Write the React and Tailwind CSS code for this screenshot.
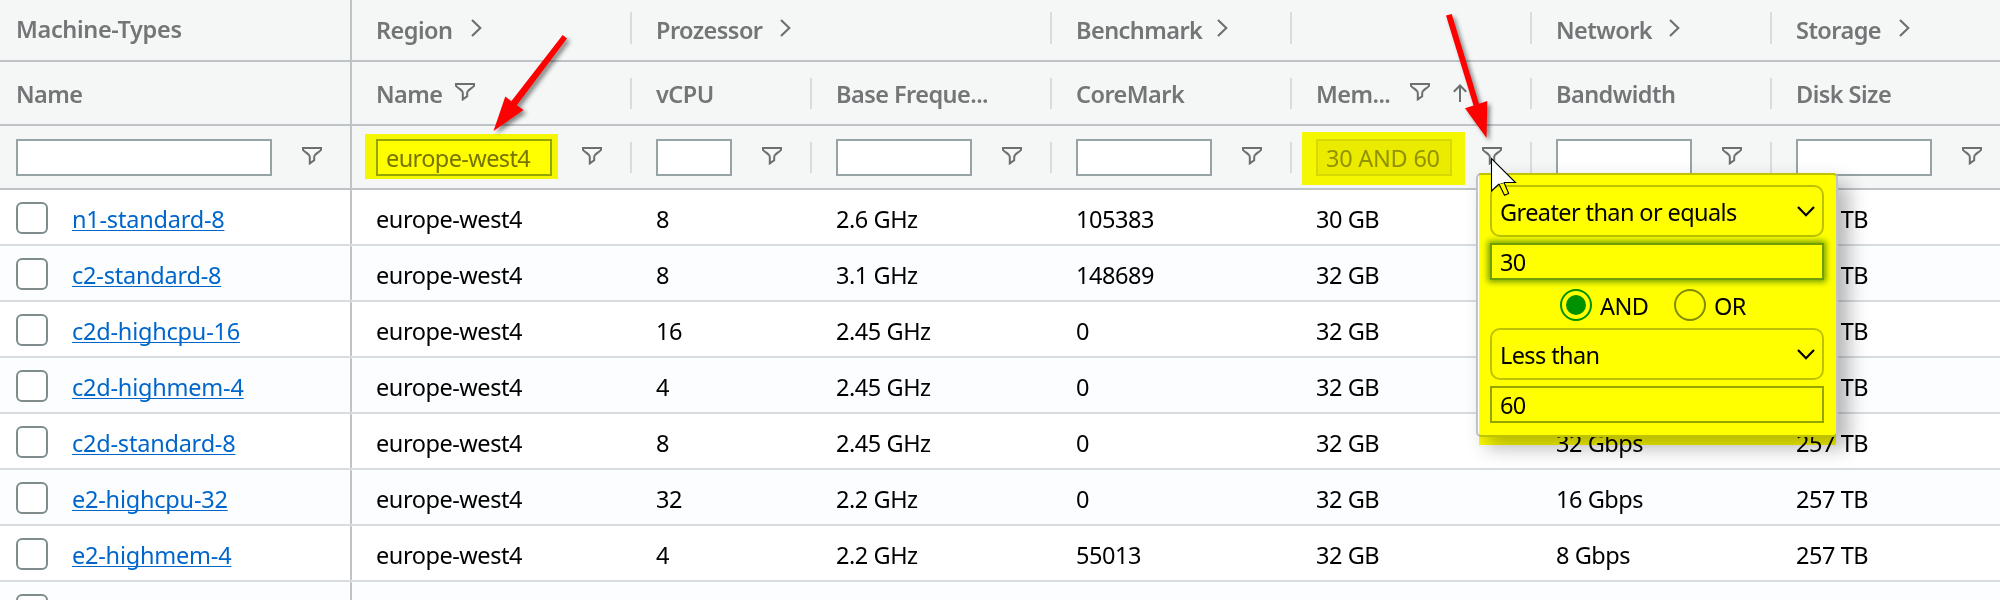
const Funnel = ({ className = "" }) => (
  <svg width="20" height="18" viewBox="0 0 20 18" fill="none" stroke="#6c6e6f" strokeWidth="2" className={`shrink-0 ${className}`}>
    <path d="M0 1H20M1 1V3C3.2 5.8 7.8 6.8 7.8 10.2V16.4L12.2 13.2V10.2C12.2 6.8 16.8 5.8 19 3V1" />
  </svg>
);

const ChevronRight = () => (
  <svg width="11" height="18" viewBox="0 0 11 18" fill="none" stroke="#6c6e6f" strokeWidth="2.1" className="-mt-[4px] shrink-0">
    <path d="M1 1L9.3 9L1 17" />
  </svg>
);

const ChevronDown = () => (
  <svg width="18" height="11" viewBox="0 0 18 11" fill="none" stroke="#000" strokeWidth="2.2" className="shrink-0">
    <path d="M1 1L9 9.2L17 1" />
  </svg>
);

const SortUp = () => (
  <svg width="14" height="18" viewBox="0 0 14 18" fill="none" stroke="#6c6e6f" strokeWidth="2" className="shrink-0">
    <path d="M7 18V1.6M0.8 7.8L7 1.5L13.2 7.8" />
  </svg>
);

const Divider = ({ className }) => <span className={`w-[2px] shrink-0 self-start bg-[#d9dcde] ${className}`} />;

const groups = [
  { label: "Region", w: "w-[280px]", tw: "w-[95px]" },
  { label: "Prozessor", w: "w-[420px]", tw: "w-[124px]" },
  { label: "Benchmark", w: "w-[240px]", tw: "w-[141px]" },
  { label: "", w: "w-[240px]", tw: "" },
  { label: "Network", w: "w-[240px]", tw: "w-[113px]" },
  { label: "Storage", w: "w-[240px]", tw: "w-[103px]" },
];

const columns = [
  { label: "Name", w: "w-[280px]", filtered: true, value: "europe-west4" },
  { label: "vCPU", w: "w-[180px]" },
  { label: "Base Freque...", w: "w-[240px]" },
  { label: "CoreMark", w: "w-[240px]" },
  { label: "Mem...", w: "w-[240px]", filtered: true, sorted: true, value: "30 AND 60", disabled: true },
  { label: "Bandwidth", w: "w-[240px]" },
  { label: "Disk Size", w: "w-[240px]" },
];

const rows = [
  ["n1-standard-8", "europe-west4", "8", "2.6 GHz", "105383", "30 GB", "", "257 TB"],
  ["c2-standard-8", "europe-west4", "8", "3.1 GHz", "148689", "32 GB", "", "257 TB"],
  ["c2d-highcpu-16", "europe-west4", "16", "2.45 GHz", "0", "32 GB", "", "257 TB"],
  ["c2d-highmem-4", "europe-west4", "4", "2.45 GHz", "0", "32 GB", "", "257 TB"],
  ["c2d-standard-8", "europe-west4", "8", "2.45 GHz", "0", "32 GB", "32 Gbps", "257 TB"],
  ["e2-highcpu-32", "europe-west4", "32", "2.2 GHz", "0", "32 GB", "16 Gbps", "257 TB"],
  ["e2-highmem-4", "europe-west4", "4", "2.2 GHz", "55013", "32 GB", "8 Gbps", "257 TB"],
  ["", "", "", "", "", "", "", ""],
];

const FilterBox = ({ value, disabled }) => (
  <div
    className={`h-[37px] flex-1 border-2 pl-2 leading-[34px] whitespace-pre ${
      disabled ? "border-[#d6d8d9] bg-[#ebebeb] tracking-[-0.25px] text-[#929292]" : "border-[#95a5a6] bg-white tracking-[-0.6px] text-[#757575]"
    }`}
  >
    {value}
  </div>
);

function Header() {
  return (
    <div className="bg-[#f5f7f7] font-[560] text-[#737576] tracking-[-0.55px]">
      <div className="flex h-[62px] border-b-2 border-[#bdc3c7]">
        <div className="w-[352px] shrink-0 border-r-2 border-[#bdc3c7] pl-4 leading-[58px] tracking-[-0.35px]">Machine-Types</div>
        {groups.map((g, i) => (
          <div key={i} className={`flex shrink-0 items-center pl-6 ${g.w}`}>
            {g.label && (
              <>
                <span className={`leading-[58px] ${g.tw}`}>{g.label}</span>
                <ChevronRight />
              </>
            )}
            <Divider className="mt-3 ml-auto h-8" />
          </div>
        ))}
      </div>
      <div className="flex h-[64px] border-b-2 border-[#bdc3c7]">
        <div className="w-[352px] shrink-0 border-r-2 border-[#bdc3c7] pl-4 leading-[65px]">Name</div>
        {columns.map((c, i) => (
          <div key={i} className={`flex h-[62px] shrink-0 items-start pl-6 ${c.w}`}>
            <span className={`leading-[65px] ${c.sorted ? "w-[94px]" : c.filtered ? "w-[79px]" : ""}`}>{c.label}</span>
            {c.filtered && <Funnel className="mt-[21px]" />}
            {c.sorted && (
              <span className="mt-[22px] ml-[23px] flex">
                <SortUp />
              </span>
            )}
            <Divider className="mt-4 ml-auto h-[31px]" />
          </div>
        ))}
      </div>
      <div className="flex h-[64px] border-b-2 border-[#bdc3c7] font-normal">
        <div className="flex w-[352px] shrink-0 border-r-2 border-[#bdc3c7] pt-[13px] pl-4">
          <FilterBox />
          <Funnel className="mt-[8px] mr-[28px] ml-[30px]" />
        </div>
        {columns.map((c, i) => (
          <div key={i} className={`flex shrink-0 pt-[13px] pl-6 ${c.w}`}>
            <FilterBox value={c.value} disabled={c.disabled} />
            <Funnel className="mt-[8px] mr-[28px] ml-[30px]" />
            <Divider className="mt-[3px] h-[31px]" />
          </div>
        ))}
      </div>
    </div>
  );
}

function Row({ cells, odd }) {
  return (
    <div className={`flex h-14 border-b-2 border-[#d9dcde] leading-[58px] text-black ${odd ? "bg-[#fcfdfe]" : "bg-white"}`}>
      <div className="flex w-[352px] shrink-0 rounded-[1px] border-r-2 border-[#bdc3c7] pl-4">
        <span className="mt-3 mr-6 h-8 w-8 shrink-0 rounded-[6px] border-2 border-[#7f8c8d] bg-white" />
        <span className="tracking-[-0.22px] text-[#0066cc] underline decoration-[1.4px] underline-offset-[2px] [text-decoration-skip-ink:none]">
          {cells[0]}
        </span>
      </div>
      {columns.map((c, i) => (
        <div key={i} className={`shrink-0 pl-6 ${c.w}`}>
          {cells[i + 1]}
        </div>
      ))}
    </div>
  );
}

const Select = ({ children }) => (
  <div className="flex h-[52px] items-center justify-between rounded-[10px] border-2 border-[#bdc3c7] pr-[7px] pl-2">
    <span className="leading-[48px] pt-[2px]">{children}</span>
    <ChevronDown />
  </div>
);

function FilterPopup() {
  return (
    <div className="absolute top-[173px] left-[1476px] h-[264px] w-[362px] rounded-[5px] border-2 border-[#bdc3c7] bg-white px-3 pt-[10px] tracking-[-0.6px] text-black shadow-[10px_10px_20px_rgba(0,0,0,0.3)]">
      <Select>Greater than or equals</Select>
      <div className="mt-[6px] h-[37px] border-2 border-[#719ece] pl-2 leading-[35px] shadow-[0_0_6px_2px_#719ece]">30</div>
      <div className="mt-[9px] flex h-8 items-center pl-[70px]">
        <span className="flex h-8 w-8 items-center justify-center rounded-full border-2 border-[#0091ea]">
          <span className="h-5 w-5 rounded-full bg-[#0091ea]" />
        </span>
        <span className="ml-[8px] w-[74px] pt-[2px] leading-[32px]">AND</span>
        <span className="h-8 w-8 rounded-full border-2 border-[#7f8c8d]" />
        <span className="ml-[8px] pt-[2px] leading-[32px]">OR</span>
      </div>
      <div className="mt-[7px]">
        <Select>Less than</Select>
      </div>
      <div className="mt-[6px] h-[37px] border-2 border-[#95a5a6] pl-2 leading-[35px]">60</div>
    </div>
  );
}

function Annotations() {
  return (
    <>
      <div className="absolute top-[134px] left-[365px] h-[45px] w-[193px] bg-[#ffff00] mix-blend-multiply" />
      <div className="absolute top-[132px] left-[1302px] h-[53px] w-[163px] bg-[#ffff00] mix-blend-multiply" />
      <div className="absolute top-[173px] left-[1479px] h-[272px] w-[357px] bg-[#ffff00] mix-blend-multiply" />
      <svg width="2000" height="600" viewBox="0 0 2000 600" className="absolute top-0 left-0">
        <g fill="#ff0000" className="[filter:drop-shadow(3px_3px_2px_rgba(0,0,0,0.45))]">
          <path d="M493.5 131L505.3 96.5L511.3 101.2L562.7 35L567 38.5L516.8 105.3L523.5 110Z" />
          <path d="M1486.5 138L1465 108.3L1473.5 105.5L1446 15.5L1451.7 14L1479 103.7L1487.3 101Z" />
        </g>
        <path d="M1499 184L1504.5 195.3L1508.7 193.5L1504 182.5Z" fill="#ffff00" stroke="#000" strokeWidth="1.1" />
        <path d="M1499 184L1491.5 191V158.5L1515.5 182.5H1504" fill="#fff" stroke="#000" strokeWidth="1.1" />
      </svg>
    </>
  );
}

export default function App() {
  return (
    <div className="relative h-[600px] w-[2000px] overflow-hidden bg-white font-['Noto_Sans',sans-serif] text-[23.5px] tracking-[-0.45px] whitespace-nowrap">
      <Header />
      {rows.map((r, i) => (
        <Row key={i} cells={r} odd={i % 2 === 1} />
      ))}
      <FilterPopup />
      <Annotations />
    </div>
  );
}
